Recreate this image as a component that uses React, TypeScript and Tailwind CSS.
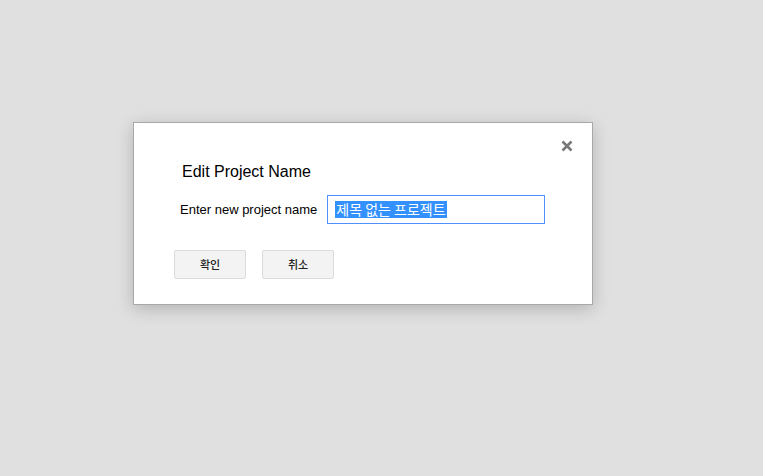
import React from 'react';

export default function App() {
  return (
    <div className="w-[763px] h-[476px] bg-[#e0e0e0] overflow-hidden pt-[122px] pl-[133px]" style={{ fontFamily: '"Liberation Sans", "Noto Sans CJK KR", sans-serif' }}>
      <div className="relative w-[460px] h-[183px] bg-white border border-[#a8a8a8] shadow-[0_4px_16px_rgba(0,0,0,0.2)]">
        <button className="absolute left-[426px] top-[16px] w-[14px] h-[14px] flex items-center justify-center">
          <svg width="12" height="12" viewBox="0 0 12 12">
            <path d="M1.5 1.5 L10.5 10.5 M10.5 1.5 L1.5 10.5" stroke="#787878" strokeWidth="2.6" strokeLinecap="butt" />
          </svg>
        </button>

        <div className="pl-[48px] pt-[39px] text-[16px] leading-[20px] text-black">Edit Project Name</div>

        <div className="flex items-center mt-[13px] pl-[46px]">
          <span className="text-[13px] text-black">Enter new project name</span>
          <div className="ml-[10px] w-[218px] h-[29px] border border-[#4d90fe] flex items-center pl-[7px]">
            <span className="bg-[#3390ff] text-white text-[14px] leading-[17px] px-[1px]" style={{ fontFamily: '"Noto Sans CJK KR", sans-serif' }}>
              제목 없는 프로젝트
            </span>
          </div>
        </div>

        <div className="flex gap-[16px] mt-[26px] pl-[40px]">
          <button className="w-[72px] h-[29px] bg-[#f3f3f3] border border-[#dcdcdc] rounded-[2px] text-[11px] text-[#222] font-medium" style={{ fontFamily: '"Noto Sans CJK KR", sans-serif' }}>
            확인
          </button>
          <button className="w-[72px] h-[29px] bg-[#f3f3f3] border border-[#dcdcdc] rounded-[2px] text-[11px] text-[#222] font-medium" style={{ fontFamily: '"Noto Sans CJK KR", sans-serif' }}>
            취소
          </button>
        </div>
      </div>
    </div>
  );
}
